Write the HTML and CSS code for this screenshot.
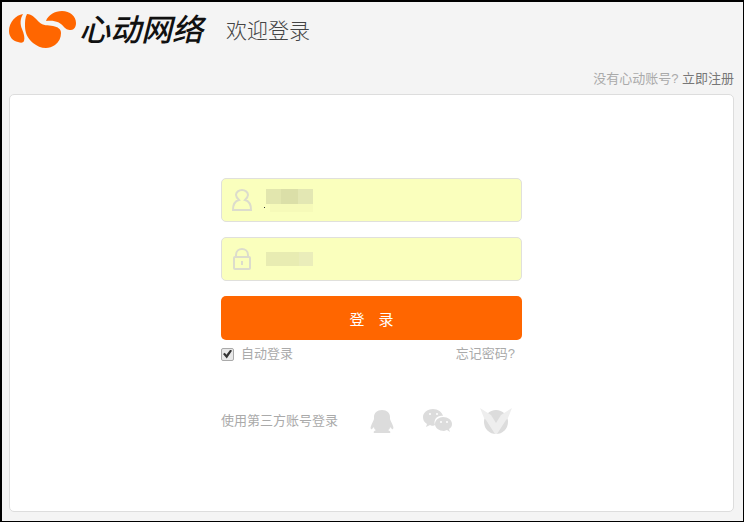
FILE: index.html
```html
<!DOCTYPE html>
<html lang="zh-CN">
<head>
    <meta charset="UTF-8">
    <meta name="viewport" content="width=device-width, initial-scale=1.0">
    <title>欢迎登录</title>
    <link rel="stylesheet" href="styles.css">
</head>
<body>
    <header class="header">
        <svg class="logo-mark" viewBox="0 0 70 40" aria-hidden="true">
            <path d="M14 4C11 9 11 14 13 19C15 24 16 28 15 31C14 33 12 33 9 32C4 31 0 27 0 21C0 12 7 5 14 4Z"/>
            <path d="M18 4C23 4 26 8 30 12C34 16 39 15 44 16C49 17 52 19 52 23C52 28 50 32 46 35C43 37 40 38 37 38C32 38 28 36 24 33C18 28 16 22 16 16C16 11 16 8 18 4Z"/>
            <path d="M37 11C39 5 46 1 53 1C61 1 67 6 67 13C67 17 65 20 62 20C58 20 57 19 55 17C51 12 46 10 37 11Z"/>
        </svg>
        <span class="logo-text">心动网络</span>
        <h1>欢迎登录</h1>
    </header>

    <p class="register">没有心动账号? <a href="#">立即注册</a></p>

    <main class="card">
        <form class="login-form">
            <div class="input-group">
                <svg class="input-icon" viewBox="0 0 20 22" aria-hidden="true">
                    <path d="M7 11C5 9 4 8 4 6C4 3 7 1 10 1C13 1 16 3 16 6C16 8 15 9 13 11C17 12 19 15 19 21H1C1 15 3 12 7 11Z"/>
                </svg>
                <input type="text" id="username" aria-label="账号">
                <span class="mask mask-user"></span>
            </div>
            <div class="input-group">
                <svg class="input-icon" viewBox="0 0 20 22" aria-hidden="true">
                    <rect x="2" y="9" width="16" height="12" rx="1"/>
                    <path d="M4 9V7C4 3 7 1 10 1C13 1 16 3 16 7V9M10 13V17"/>
                </svg>
                <input type="password" id="password" aria-label="密码">
                <span class="mask"></span>
            </div>
            <button type="submit" class="login-btn">登<span class="btn-gap"></span>录</button>
            <div class="options">
                <input type="checkbox" id="auto" checked>
                <label for="auto">自动登录</label>
                <a href="#">忘记密码?</a>
            </div>
            <div class="third-party">
                <span class="third-label">使用第三方账号登录</span>
                <a href="#" aria-label="QQ">
                    <svg width="24" height="26" viewBox="0 0 24 26">
                        <path d="M12 2C7 2 4 5 4 9V11C4 12 2 15 1 18C0 20 1 22 2 21L4 19C4 21 5 22 6 22C4 23 3 24 4 25H20C21 24 20 23 18 22C19 22 20 21 20 19L22 21C23 22 24 20 23 18C22 15 20 12 20 11V9C20 5 17 2 12 2Z"/>
                    </svg>
                </a>
                <a href="#" aria-label="微信">
                    <svg width="30" height="26" viewBox="0 0 30 26">
                        <path d="M11 1C5 1 1 5 1 9C1 12 2 14 5 16L4 19L8 17C9 18 12 18 13 17C11 11 16 7 21 8C20 4 16 1 11 1Z"/>
                        <path d="M21 9C17 9 13 12 13 16C13 20 17 23 22 23L25 22L28 24L27 21C29 20 30 18 30 16C30 12 26 9 21 9Z"/>
                        <g class="eyes">
                            <circle cx="8" cy="6" r="1"/>
                            <circle cx="15" cy="6" r="1"/>
                            <circle cx="19" cy="14" r="1"/>
                            <circle cx="25" cy="14" r="1"/>
                        </g>
                    </svg>
                </a>
                <a href="#" aria-label="VeryCD">
                    <svg width="32" height="28" viewBox="0 0 32 28">
                        <circle cx="16" cy="15" r="12"/>
                        <path class="wings" d="M0 1L11 8L16 16L21 8L32 1L28 11L26 13L17 27H15L6 13L4 11Z"/>
                    </svg>
                </a>
            </div>
        </form>
    </main>
</body>
</html>
```

FILE: styles.css
```css
* {
    box-sizing: border-box;
}

body {
    font-family: 'Liberation Sans', 'Noto Sans CJK SC', sans-serif;
    font-size: 13px;
    line-height: 20px;
    color: #aaaaaa;
    background-color: #f4f4f4;
    margin: 0;
    min-height: 100vh;
    padding: 6px 9px 9px 7px;
    border: 1px solid #000000;
    border-width: 2px 1px 1px 2px;
    display: flex;
    flex-direction: column;
}

a {
    color: inherit;
    text-decoration: none;
}

.header {
    display: flex;
    align-items: flex-start;
    height: 44px;
}

.logo-mark {
    width: 70px;
    height: 40px;
    margin-top: 2px;
    fill: #ff6600;
}

.logo-text {
    font-family: 'Noto Sans CJK SC', sans-serif;
    font-size: 31px;
    font-weight: 500;
    font-style: italic;
    line-height: 40px;
    color: #111111;
}

h1 {
    margin: 0 0 0 23px;
    font-family: 'Noto Sans CJK SC', sans-serif;
    font-size: 21px;
    font-weight: 300;
    line-height: 42px;
    color: #444444;
}

.register {
    margin: 17px 0 5px;
    text-align: right;
}

.register a {
    color: #777777;
}

.card {
    flex: 1;
    padding: 83px 20px 20px;
    background-color: #ffffff;
    border: 1px solid #dddddd;
    border-radius: 5px;
}

.login-form {
    max-width: 301px;
    margin: 0 auto;
}

.input-group {
    position: relative;
    display: flex;
    align-items: center;
    height: 44px;
    margin-bottom: 15px;
    padding-left: 10px;
    background-color: #faffbd;
    border: 1px solid #e0e0dc;
    border-radius: 5px;
}

.input-icon {
    width: 20px;
    height: 22px;
    fill: none;
    stroke: #dcdccc;
    stroke-width: 2;
}

.input-group input {
    flex: 1;
    min-width: 0;
    height: 40px;
    padding: 0 12px;
    border: none;
    outline: none;
    background: transparent;
    font-size: 13px;
}

.mask {
    position: absolute;
    left: 44px;
    top: 14px;
    width: 47px;
    height: 14px;
    background: linear-gradient(to right, #e8ecb2 70%, #eaedba 70%);
}

.mask-user {
    top: 10px;
    height: 15px;
    background: linear-gradient(to right, #e2e6ae 32%, #dbdfa8 32%, #dbdfa8 68%, #e3e7b3 68%);
}

.mask-user::before {
    content: '';
    position: absolute;
    left: -2px;
    bottom: -4px;
    width: 1px;
    height: 1px;
    background-color: #333333;
}

.mask-user::after {
    content: '';
    position: absolute;
    left: 4px;
    top: 15px;
    width: 43px;
    height: 8px;
    background-color: #f6fab9;
}

.login-btn {
    display: flex;
    justify-content: center;
    align-items: center;
    width: 100%;
    height: 44px;
    padding: 0;
    border: none;
    border-radius: 5px;
    background-color: #ff6600;
    color: #ffffff;
    font-family: inherit;
    font-size: 15px;
    cursor: pointer;
}

.btn-gap {
    width: 14px;
}

.options {
    display: flex;
    align-items: center;
    margin-top: 4px;
    padding-right: 7px;
}

.options input {
    appearance: none;
    width: 13px;
    height: 13px;
    margin: 0 7px 0 0;
    padding: 1px;
    border: 1px solid #aaaaaa;
    border-radius: 2px;
    background-color: #e8e8e8;
}

.options input:checked::before {
    content: '';
    display: block;
    width: 9px;
    height: 9px;
    background-color: #333333;
    clip-path: polygon(0 50%, 20% 35%, 38% 58%, 82% 0, 100% 15%, 42% 100%);
}

.options a {
    margin-left: auto;
}

.third-party {
    display: flex;
    align-items: center;
    height: 28px;
    margin-top: 43px;
    padding-right: 10px;
}

.third-label {
    margin-right: auto;
    white-space: nowrap;
}

.third-party a {
    display: flex;
    margin-left: 25px;
}

.third-party a + a {
    margin-left: 28px;
}

.third-party svg {
    fill: #dcdcdc;
}

.third-party .eyes {
    fill: #ffffff;
}

.third-party .wings {
    fill: #eeeeee;
}
```
